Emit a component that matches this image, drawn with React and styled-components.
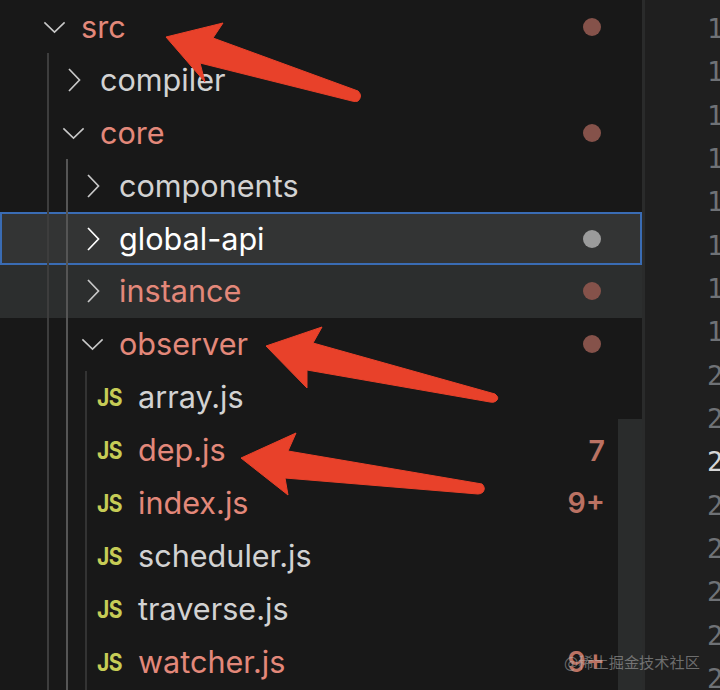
import React from "react";
import styled, { createGlobalStyle } from "styled-components";

const Global = createGlobalStyle`
  html, body { margin: 0; padding: 0; background: #181818; }
  #root { width: 720px; height: 690px; overflow: hidden; }
`;

const Screen = styled.div`
  position: relative;
  display: flex;
  width: 720px;
  height: 690px;
  overflow: hidden;
  background: #181818;
  font-family: Inter, "Noto Sans", sans-serif;
`;

const Sidebar = styled.div`
  position: relative;
  width: 642px;
  flex: none;
  padding-top: 0.5px;
  background: #181818;
  overflow: hidden;
`;

const Divider = styled.div`
  width: 3px;
  flex: none;
  background: #2a2b2b;
`;

const Editor = styled.div`
  flex: 1;
  padding: 7px 0 0 62px;
  background: #1f1f1f;
  overflow: hidden;
`;

const LineNo = styled.div`
  height: 43.34px;
  line-height: 43.34px;
  font-family: "DejaVu Sans Mono", monospace;
  font-size: 27px;
  white-space: nowrap;
  color: ${(p) => (p.$active ? "#d6d6d6" : "#6f7276")};
`;

const Group = styled.div`
  position: relative;
  &::before {
    content: "";
    position: absolute;
    z-index: 2;
    top: 0;
    bottom: -400px;
    left: ${(p) => p.$guide}px;
    width: 2px;
    background: ${(p) => p.$color};
  }
`;

const rowBg = { focus: "#333434", hover: "#2c2e2e" };

const Row = styled.div`
  box-sizing: border-box;
  display: flex;
  align-items: center;
  height: 52.9px;
  padding-left: ${(p) => 43 + p.$depth * 19}px;
  padding-right: 39px;
  background: ${(p) => rowBg[p.$state] || "transparent"};
  border: ${(p) => (p.$state === "focus" ? "2px solid #3a6cb4" : "0 solid transparent")};
  ${(p) => p.$state === "focus" && `padding-left: ${41 + p.$depth * 19}px; padding-right: 37px;`}
`;

const Twistie = styled.span`
  display: flex;
  width: 38px;
  flex: none;
  svg { display: block; }
`;

const TwistieBox = styled.span`
  display: flex;
  justify-content: center;
  width: 23px;
`;

const FileIcon = styled.span`
  display: block;
  width: 41px;
  margin-left: -3px;
  flex: none;
  font-size: 24.5px;
  font-weight: 700;
  letter-spacing: -0.6px;
  color: #c6cc56;
  transform: scaleX(0.86);
  transform-origin: left center;
`;

const Label = styled.span`
  flex: 1;
  font-size: 30.6px;
  line-height: 52px;
  white-space: nowrap;
  color: ${(p) => (p.$modified ? "#e3887a" : p.$state === "focus" ? "#ffffff" : "#d2d2d2")};
`;

const Dot = styled.span`
  width: 18px;
  height: 18px;
  margin-right: 2px;
  border-radius: 50%;
  background: ${(p) => (p.$plain ? "#9b9b9b" : "#85524a")};
`;

const Badge = styled.span`
  margin-right: -2px;
  font-size: 28.5px;
  font-weight: 600;
  color: #bb7263;
`;

const Scrollbar = styled.div`
  position: absolute;
  left: 618px;
  top: 419px;
  width: 24px;
  height: 271px;
  background: #2a2c2c;
`;

const Arrows = styled.svg`
  position: absolute;
  z-index: 3;
  left: 0;
  top: 0;
  pointer-events: none;
`;

const Watermark = styled.div`
  position: absolute;
  z-index: 4;
  left: 564px;
  top: 651px;
  font-family: "Noto Sans CJK SC", sans-serif;
  font-size: 15.2px;
  line-height: 20px;
  white-space: nowrap;
  color: rgba(190, 190, 190, 0.5);
`;

const Chevron = ({ open, color = "#c8c8c8" }) => (
  <TwistieBox>
    {open ? (
      <svg width="25" height="14" viewBox="0 0 25 14">
        <polyline points="1.5,2 12.5,12.5 23.5,2" fill="none" stroke={color} strokeWidth="1.7" />
      </svg>
    ) : (
      <svg width="14" height="24" viewBox="0 0 14 24">
        <polyline points="2,1 12.5,12 2,23" fill="none" stroke={color} strokeWidth="1.7" />
      </svg>
    )}
  </TwistieBox>
);

const Item = ({ depth, name, open, file, modified, state, dot, badge }) => (
  <Row $depth={depth} $state={state}>
    {file ? (
      <FileIcon>JS</FileIcon>
    ) : (
      <Twistie>
        <Chevron open={open} color={state === "focus" ? "#ffffff" : "#c8c8c8"} />
      </Twistie>
    )}
    <Label $modified={modified} $state={state}>{name}</Label>
    {dot && <Dot $plain={dot === "plain"} />}
    {badge && <Badge>{badge}</Badge>}
  </Row>
);

const lines = [12, 13, 14, 15, 16, 17, 18, 19, 20, 21, 22, 23, 24, 25, 26, 27];

export default function App() {
  return (
    <Screen>
      <Global />
      <Sidebar>
        <Item depth={0} name="src" open modified dot="mod" />
        <Group $guide={47} $color="#3d3d3d">
          <Item depth={1} name="compiler" />
          <Item depth={1} name="core" open modified dot="mod" />
          <Group $guide={66} $color="#555555">
            <Item depth={2} name="components" />
            <Item depth={2} name="global-api" state="focus" dot="plain" />
            <Item depth={2} name="instance" state="hover" modified dot="mod" />
            <Item depth={2} name="observer" open modified dot="mod" />
            <Group $guide={85} $color="#333333">
              <Item depth={3} file name="array.js" />
              <Item depth={3} file name="dep.js" modified badge="7" />
              <Item depth={3} file name="index.js" modified badge="9+" />
              <Item depth={3} file name="scheduler.js" />
              <Item depth={3} file name="traverse.js" />
              <Item depth={3} file name="watcher.js" modified badge="9+" />
            </Group>
          </Group>
        </Group>
        <Scrollbar />
      </Sidebar>
      <Divider />
      <Editor>
        {lines.map((n) => (
          <LineNo key={n} $active={n === 22}>{n}</LineNo>
        ))}
      </Editor>
      <Arrows width="720" height="690" viewBox="0 0 720 690">
        <g fill="#e8412a" stroke="#e8412a" strokeWidth="1" strokeLinejoin="round">
          <path d="M166 37 L223 23 L213 38 L358 91 Q363 96 358 101 Q356 102 352 101 L200 63 L205 82 Z" />
          <path d="M266 346 L322 327 L313 343 L495 394 Q500 398 496 401 Q494 403 490 402 L307 370 L307 388 Z" />
          <path d="M241 458 L296 433 L288 451 L482 484 Q486 488 483 492 Q481 494 478 494 L285 478 L288 495 Z" />
        </g>
      </Arrows>
      <Watermark>@稀土掘金技术社区</Watermark>
    </Screen>
  );
}
